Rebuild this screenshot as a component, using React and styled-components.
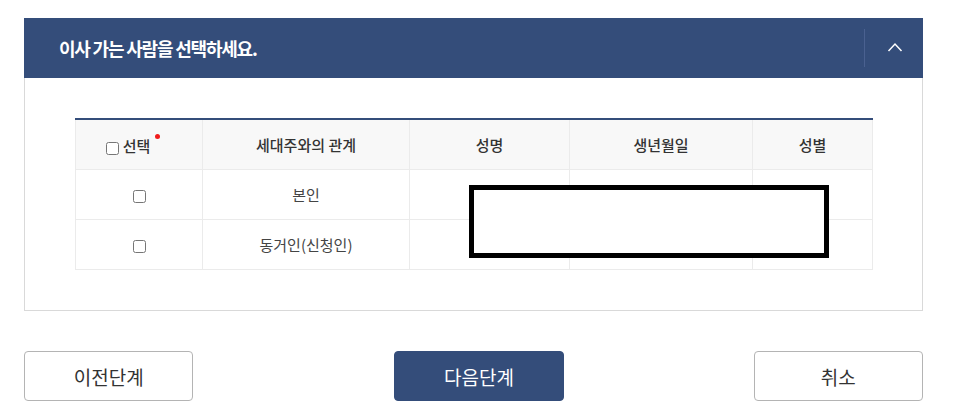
import React from 'react'
import styled, { createGlobalStyle } from 'styled-components'

const GlobalStyle = createGlobalStyle`
    body {
        margin: 0;
        background: #fff;
        font-family: "Noto Sans CJK KR", "Noto Sans", sans-serif;
        color: #333;
    }
`

const Page = styled.div`
    padding: 18px 0 0 24px;
    width: 899px;
`

const Panel = styled.section`
    border: 1px solid #d9d9d9;
    border-top: none;
`

const Header = styled.div`
    height: 60px;
    margin: 0 -1px;
    background: #344d7a;
    display: flex;
    align-items: center;
    color: #fff;
    h2 {
        flex: 1;
        margin: 0;
        padding-left: 35px;
        font-size: 18px;
        font-weight: 700;
        letter-spacing: -1.2px;
    }
`

const Toggle = styled.button`
    width: 59px;
    height: 38px;
    border: none;
    border-left: 1px solid #4a6190;
    background: transparent;
    display: flex;
    align-items: center;
    justify-content: center;
    padding: 0 0 2px 1px;
    cursor: pointer;
`

const Body = styled.div`
    padding: 40px 50px 40px 50px;
    position: relative;
`

const Table = styled.table`
    width: 797px;
    border-collapse: collapse;
    border-top: 2px solid #344d7a;
    font-size: 15px;
    table-layout: fixed;
    th, td {
        border: 1px solid #ebebeb;
        text-align: center;
        height: 49px;
        padding: 0;
    }
    th {
        background: #f8f8f8;
        font-weight: 500;
        color: #333;
        border-top: none;
    }
    td {
        color: #444;
    }
`

const Check = styled.input.attrs({ type: 'checkbox' })`
    width: 13px;
    height: 13px;
    margin: 0;
    vertical-align: middle;
`

const SelectLabel = styled.span`
    position: relative;
    display: inline-flex;
    align-items: center;
    gap: 4px;
    top: 1px;
    margin-right: 22px;
    input {
        position: relative;
        top: 3px;
    }
    &::after {
        content: '';
        position: absolute;
        right: -10px;
        top: -1px;
        width: 5px;
        height: 5px;
        border-radius: 50%;
        background: #f01c1c;
    }
`

const Redact = styled.div`
    position: absolute;
    left: 444px;
    top: 107px;
    width: 350px;
    height: 63px;
    border: 5px solid #000;
    background: #fff;
`

const Actions = styled.div`
    margin-top: 40px;
    display: flex;
`

const Button = styled.button`
    width: 170px;
    height: 50px;
    margin-left: ${p => p.offset || 0}px;
    border-radius: 4px;
    font-family: "Noto Sans CJK KR", sans-serif;
    font-size: 19px;
    border: 1px solid ${p => (p.primary ? '#344d7a' : '#b4b4b4')};
    background: ${p => (p.primary ? '#344d7a' : '#fff')};
    color: ${p => (p.primary ? '#fff' : '#333')};
    cursor: pointer;
`

const rows = ['본인', '동거인(신청인)']

export default function App() {
    return (
        <Page>
            <GlobalStyle />
            <Panel>
                <Header>
                    <h2>이사 가는 사람을 선택하세요.</h2>
                    <Toggle aria-label="접기">
                        <svg width="16" height="10" viewBox="0 0 16 10">
                            <path d="M1.5 9 L8 2 L14.5 9" fill="none" stroke="#fff" strokeWidth="1.5" />
                        </svg>
                    </Toggle>
                </Header>
                <Body>
                    <Table>
                        <colgroup>
                            <col style={{ width: 127 }} />
                            <col style={{ width: 207 }} />
                            <col style={{ width: 160 }} />
                            <col style={{ width: 183 }} />
                            <col style={{ width: 120 }} />
                        </colgroup>
                        <thead>
                            <tr>
                                <th>
                                    <SelectLabel><Check />선택</SelectLabel>
                                </th>
                                <th>세대주와의 관계</th>
                                <th>성명</th>
                                <th>생년월일</th>
                                <th>성별</th>
                            </tr>
                        </thead>
                        <tbody>
                            {rows.map(r => (
                                <tr key={r}>
                                    <td><Check /></td>
                                    <td>{r}</td>
                                    <td></td>
                                    <td></td>
                                    <td></td>
                                </tr>
                            ))}
                        </tbody>
                    </Table>
                    <Redact />
                </Body>
            </Panel>
            <Actions>
                <Button>이전단계</Button>
                <Button primary offset={201}>다음단계</Button>
                <Button offset={190}>취소</Button>
            </Actions>
        </Page>
    )
}
